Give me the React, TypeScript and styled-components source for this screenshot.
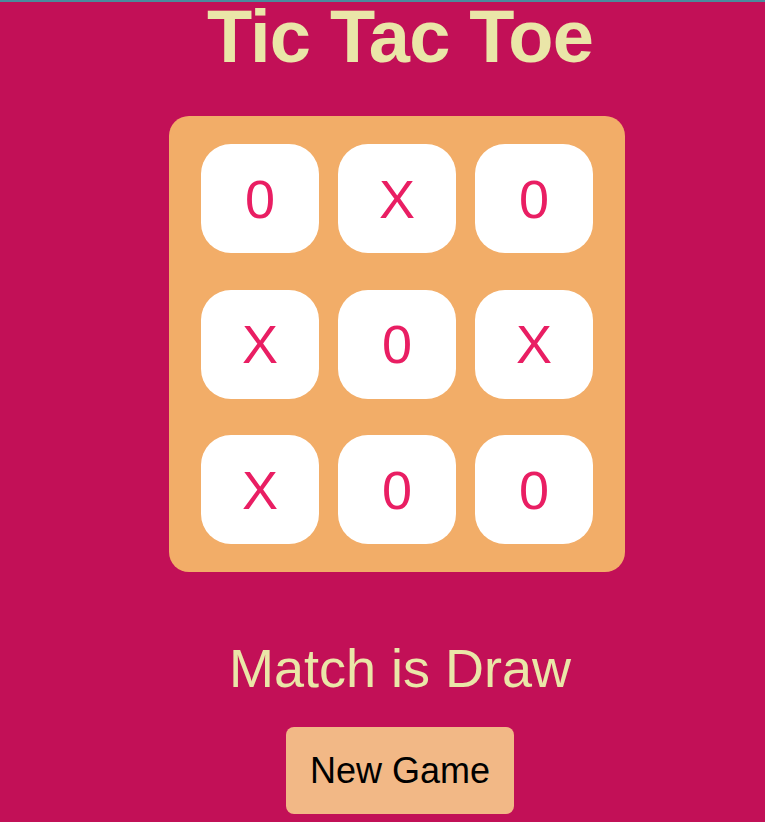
import React from "react";
import styled, { createGlobalStyle } from "styled-components";

const GlobalStyle = createGlobalStyle`
  html, body {
    margin: 0;
    padding: 0;
    background: #c21057;
  }
  body {
    border-top: 2px solid #4a8b9d;
    font-family: "Liberation Sans", Arial, sans-serif;
    overflow: hidden;
  }
`;

const Page = styled.main`
  display: flex;
  flex-direction: column;
  align-items: center;
  padding-left: 35px;
  min-height: 820px;
  box-sizing: border-box;
`;

const Title = styled.h1`
  margin: 0;
  font-size: 74px;
  line-height: 70px;
  font-weight: 700;
  letter-spacing: -0.8px;
  color: #eae6a8;
`;

const Board = styled.div`
  margin: 44px 6px 0 0;
  width: 456px;
  height: 456px;
  box-sizing: border-box;
  padding: 28px 32px;
  background: #f2ad68;
  border-radius: 20px;
  display: grid;
  grid-template-columns: repeat(3, 118px);
  grid-template-rows: repeat(3, 109px);
  justify-content: space-between;
  row-gap: 36.5px;
`;

const Cell = styled.button`
  border: none;
  padding: 0;
  margin: 0;
  background: #ffffff;
  border-radius: 30px;
  display: flex;
  align-items: center;
  justify-content: center;
  font-family: "Liberation Sans", Arial, sans-serif;
  font-size: 54px;
  color: #e91e63;
  cursor: pointer;
`;

const Status = styled.p`
  margin: 65px 0 0;
  font-size: 54px;
  line-height: 62px;
  color: #eae6a8;
`;

const NewGameButton = styled.button`
  margin-top: 28px;
  width: 228px;
  height: 87px;
  border: none;
  border-radius: 8px;
  background: #f2b886;
  color: #000000;
  font-family: "Liberation Sans", Arial, sans-serif;
  font-size: 36px;
  cursor: pointer;
`;

const cells = ["0", "X", "0", "X", "0", "X", "X", "0", "0"];

export default function App() {
  return (
    <>
      <GlobalStyle />
      <Page>
        <Title>Tic Tac Toe</Title>
        <Board>
          {cells.map((c, i) => (
            <Cell key={i}>{c}</Cell>
          ))}
        </Board>
        <Status>Match is Draw</Status>
        <NewGameButton>New Game</NewGameButton>
      </Page>
    </>
  );
}
